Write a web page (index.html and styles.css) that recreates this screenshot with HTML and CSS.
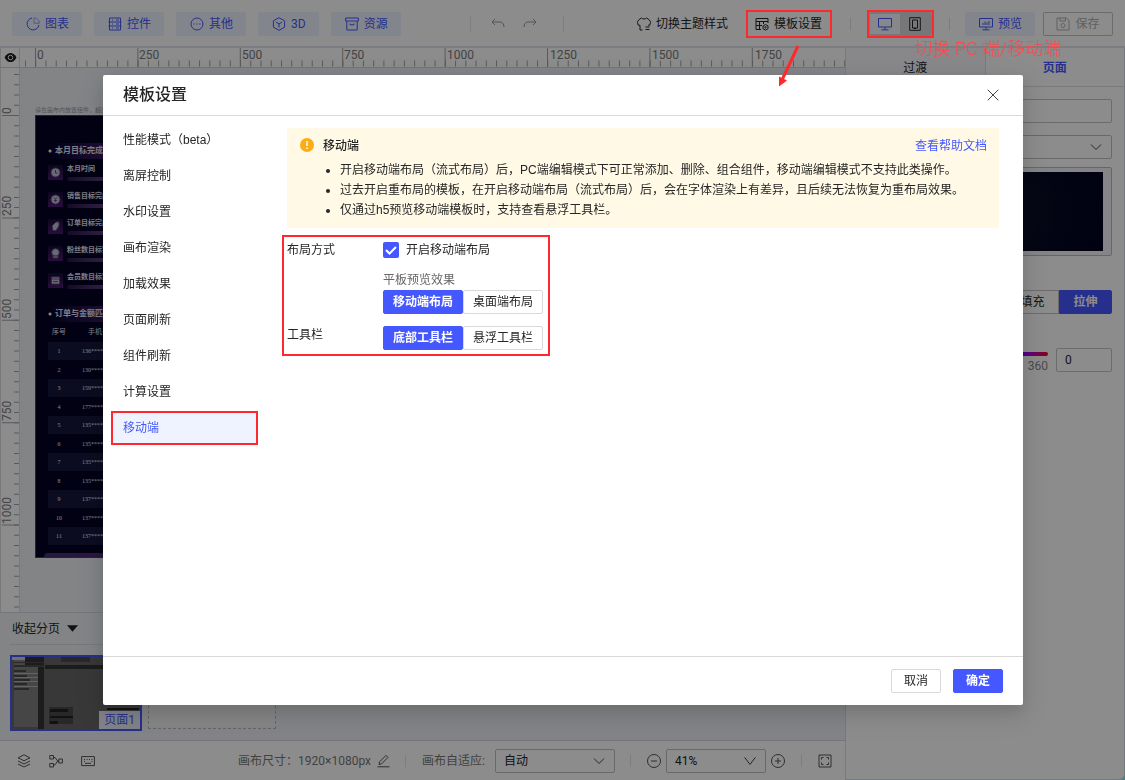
FILE: index.html
```html
<!DOCTYPE html>
<html lang="zh-CN">
<head>
<meta charset="utf-8">
<title>模板设置</title>
<link rel="stylesheet" href="styles.css">
</head>
<body>
<div class="app">
  <header class="topbar">
    <nav class="tools">
      <button class="tool"><svg class="ico" viewBox="0 0 14 14"><path d="M6 1a6 6 0 1 0 7 7"/><path d="M8 .8V6.200h5.400A6 6 0 0 0 8 .8z" opacity=".5"/></svg>图表</button>
      <button class="tool"><svg class="ico" viewBox="0 0 14 14"><path d="M1.500 1h11v12h-11zM.5 5h13M.5 9h13M4 3h1M8 3h3M4 7h1M8 7h3M4 11h1M8 11h3"/></svg>控件</button>
      <button class="tool"><svg class="ico" viewBox="0 0 14 14"><circle cx="7" cy="7" r="6"/><path d="M3.500 7h1.200M6.400 7h1.200M9.300 7h1.200"/></svg>其他</button>
      <button class="tool"><svg class="ico" viewBox="0 0 14 14"><path d="M7 .7l5.600 3.100v6.400L7 13.300l-5.600-3.100V3.800z"/><path d="M4 5.200l3 1.700 3-1.700M7 6.900v3.500"/></svg>3D</button>
      <button class="tool"><svg class="ico" viewBox="0 0 14 14"><path d="M.6 1h12.800v3H.6zM1.800 4v9h10.400V4M5 6.500v1.300h4V6.500"/></svg>资源</button>
    </nav>
    <div class="history">
      <button class="plain muted" aria-label="撤销"><svg class="ico" viewBox="0 0 14 14"><path d="M4 2L1 5l3 3M1 5h8c2.500 0 4 2 4 5"/></svg></button>
      <button class="plain muted" aria-label="重做"><svg class="ico" viewBox="0 0 14 14"><path d="M10 2l3 3-3 3M13 5H5c-2.500 0-4 2-4 5"/></svg></button>
    </div>
    <div class="actions">
      <button class="plain"><svg class="ico" viewBox="0 0 14 14"><path d="M5.500 13H3V8.200H1.200L.5 5.500C.5 3.500 2.500 2 4.500 1c1 1.300 4 1.300 5 0 2 1 4 2.500 4 4.500l-.7 2.700H11M8.500 10h4M8.500 12.500h4"/></svg>切换主题样式</button>
      <button class="plain template"><svg class="ico" viewBox="0 0 14 14"><path d="M6 12.500H1V1.500h12V6M1 4.500h12M4.500 4.500v8M1 8.500h6M8.500 4.500V7"/><path d="M10.500 7.500l2.500 1.400v2.800l-2.500 1.400L8 11.700V8.900z"/><circle cx="10.500" cy="10.300" r=".7"/></svg>模板设置</button>
      <i class="rule"></i>
      <div class="device">
        <button class="device-btn on" aria-label="PC 端"><svg class="ico-lg" viewBox="0 0 16 14"><path d="M1.500 1.500h13v8.500h-13zM8 10v2.500M4.500 12.800h7"/></svg></button>
        <button class="device-btn" aria-label="移动端"><svg class="ico-lg" viewBox="0 0 16 14"><path d="M2.700.7h10.600v12.600H2.700z"/><path d="M5.500 3h5v8h-5zM7 11.500h2"/></svg></button>
      </div>
      <i class="rule"></i>
      <button class="tool"><svg class="ico-lg" viewBox="0 0 16 14"><path d="M1.500 1.500h13v8.500h-13zM8 10v2.500M4.500 12.800h7M5 8V6M7 8V4.500M9 8V5.500M11 8V4"/></svg>预览</button>
      <button class="save"><svg class="ico" viewBox="0 0 14 14"><path d="M1 1h9.500L13 3.500V13H1zM4 1v3h5.500V1"/><circle cx="7" cy="8.500" r="2"/></svg>保存</button>
    </div>
  </header>

  <div class="body">
    <main class="work">
      <div class="ruler-row">
        <button class="eye" aria-label="显示"><svg viewBox="0 0 14 12"><path d="M.5 6C2.500 2 5 1 7 1s4.500 1 6.500 5C11.500 10 9 11 7 11S2.500 10 .5 6z" fill="#1c1c1c"/><circle cx="7" cy="6" r="2.500" stroke="#fff"/></svg></button>
        <svg class="ruler-h"><path class="tick" d="M5 15.500h820" stroke-width="6" stroke-dasharray="1 9.240"/><path class="tick" d="M15 9.500h810" stroke-width="19" stroke-dasharray="1 101.400"/>
          <text x="17" y="11">0</text><text x="119" y="11">250</text><text x="222" y="11">500</text><text x="324" y="11">750</text><text x="427" y="11">1000</text><text x="530" y="11">1250</text><text x="632" y="11">1500</text><text x="735" y="11">1750</text></svg>
      </div>
      <div class="stage">
        <svg class="ruler-v"><path class="tick" d="M16 6v700" stroke-width="6" stroke-dasharray="1 9.240"/><path class="tick" d="M10 47v700" stroke-width="18" stroke-dasharray="1 101.400"/>
          <g transform="rotate(-90)"><text x="-46" y="10">0</text><text x="-148" y="10">250</text><text x="-251" y="10">500</text><text x="-353" y="10">750</text><text x="-456" y="10">1000</text></g></svg>
        <div class="scene">
          <p class="hint">请在画布内放置组件，超出画布部分将不显示</p>
          <section class="board">
            <h2 class="board-title">本月目标完成情况</h2>
            <ul class="goals">
              <li class="goal"><svg class="goal-ico" viewBox="0 0 15 15"><circle cx="7.500" cy="7.500" r="4.500"/><path d="M7.500 5v3h2"/></svg><span class="goal-name">本月时间<b class="bar"></b></span></li>
              <li class="goal"><svg class="goal-ico" viewBox="0 0 15 15"><circle cx="7.500" cy="7.500" r="4.500"/><path d="M6 5.500l1.500 2 1.500-2M7.500 7.500V10M6 8.500h3"/></svg><span class="goal-name">销售目标完成率<b class="bar"></b></span></li>
              <li class="goal"><svg class="goal-ico" viewBox="0 0 15 15"><path d="M4 7l4-4h3v4l-3 4.500H5z"/></svg><span class="goal-name">订单目标完成率<b class="bar"></b></span></li>
              <li class="goal"><svg class="goal-ico" viewBox="0 0 15 15"><circle cx="7.500" cy="6.500" r="3.800"/><path d="M5 10h5v2H5z"/></svg><span class="goal-name">粉丝数目标完成率<b class="bar"></b></span></li>
              <li class="goal"><svg class="goal-ico" viewBox="0 0 15 15"><path d="M3.500 4h8v7h-8z"/><path d="M3.500 6h8M5 8.500h5"/></svg><span class="goal-name">会员数目标完成率<b class="bar"></b></span></li>
            </ul>
            <h2 class="board-title">订单与金额匹配</h2>
            <table class="orders">
              <thead><tr><th>序号</th><th>手机号</th></tr></thead>
              <tbody>
                <tr><td>1</td><td>136****2</td></tr><tr><td>2</td><td>130****8</td></tr><tr><td>3</td><td>159****5</td></tr><tr><td>4</td><td>177****8</td></tr><tr><td>5</td><td>135****7</td></tr><tr><td>6</td><td>135****5</td></tr><tr><td>7</td><td>135****8</td></tr><tr><td>8</td><td>135****8</td></tr><tr><td>9</td><td>137****5</td></tr><tr><td>10</td><td>137****5</td></tr><tr><td>11</td><td>137****5</td></tr>
              </tbody>
            </table>
            <div class="glow"></div>
          </section>
        </div>
      </div>
      <section class="pages">
        <button class="collapse">收起分页<svg viewBox="0 0 12 7"><path d="M0 0h12L6 7z"/></svg></button>
        <div class="thumbs">
          <button class="thumb">
            <svg viewBox="0 0 128 72" preserveAspectRatio="none"><path fill="#666" d="M0 0h128v72H0z"/><path fill="#808080" d="M2 3h30v67H2z"/><path fill="#ccc" d="M0 0h13v3H0z"/><path fill="#333" d="M13 0h19v9H13zM26 10h6v62h-6zM33 8h95v4H33z"/><path fill="#b4b4b4" d="M2 16h24v1H2zM2 20h24v1H2zM2 24h24v1H2zM2 29h24v1H2z"/><path fill="#4a4a4a" d="M2 5h30v1H2zM2 8h30v2H2zM2 13h12v2H2zM2 18h13v2H2zM2 22h16v2H2zM2 26h13v2H2zM2 31h15v2H2zM49 0h29v5H49zM37 50h24v17H37z"/><path fill="#222" d="M38 52h18v3H38zM38 59h23v2H38zM38 64h8v3H38zM95 51h32v2H95z"/></svg>
            <span class="thumb-name">页面1</span>
          </button>
          <button class="thumb-add" aria-label="添加页面"></button>
        </div>
      </section>
      <footer class="status">
        <div class="status-tools">
          <button class="plain" aria-label="图层"><svg class="ico" viewBox="0 0 14 14"><path d="M7 .8l6 3-6 3-6-3zM1 7l6 3 6-3M1 10l6 3 6-3"/></svg></button>
          <button class="plain" aria-label="关系"><svg class="ico" viewBox="0 0 14 14"><path d="M.8 1.500h3.700V5H.8zM.8 9.500h3.700V13H.8zM9.800 5h3.600v4H9.800zM4.500 3.200C8 3.200 6.500 7 9.800 7M4.500 11.200C8 11.200 6.500 7 9.800 7"/></svg></button>
          <button class="plain" aria-label="键盘"><svg class="ico" viewBox="0 0 14 14"><path d="M.6 2.600h12.800v9H.6zM3 5.500h1M5.500 5.500h1M8 5.500h1M10.500 5.500h1M4 9.300h6M3 7.400h1M10.500 7.400h1"/></svg></button>
        </div>
        <div class="status-info">
          <span class="dim">画布尺寸：</span><span class="dim size">1920×1080px</span>
          <button class="plain" aria-label="编辑尺寸"><svg class="ico" viewBox="0 0 14 14"><path d="M1.500 12.800h12M3 10.500l.6-2.700L10 1.400l2 2-6.400 6.400z"/></svg></button>
          <i class="rule"></i>
          <label class="dim" for="fit">画布自适应:</label>
          <span class="pick fit"><select id="fit"><option>自动</option></select><svg viewBox="0 0 12 8"><path d="M1 1.500l5 5 5-5"/></svg></span>
          <i class="rule"></i>
          <div class="zoom">
            <button class="plain" aria-label="缩小"><svg class="ico" viewBox="0 0 14 14"><circle cx="7" cy="7" r="6.500"/><path d="M4 7h6"/></svg></button>
            <span class="pick scale"><select aria-label="缩放"><option>41%</option></select><svg viewBox="0 0 12 8"><path d="M.6.4L6 7.400l5.400-7"/></svg></span>
            <button class="plain" aria-label="放大"><svg class="ico" viewBox="0 0 14 14"><circle cx="7" cy="7" r="6.500"/><path d="M4 7h6M7 4v6"/></svg></button>
          </div>
          <i class="rule last"></i>
          <button class="plain" aria-label="全屏"><svg class="ico" viewBox="0 0 14 14"><path d="M1 1h12v12H1zM3.500 5.500v-2h2M8.500 3.500h2v2M10.500 8.500v2h-2M5.500 10.500h-2v-2"/></svg></button>
        </div>
      </footer>
    </main>

    <aside class="panel">
      <div class="tabs"><button class="tab">过渡</button><button class="tab current">页面</button></div>
      <div class="props">
        <input class="field" type="text" aria-label="名称">
        <span class="pick"><select aria-label="背景类型"><option></option></select><svg viewBox="0 0 12 8"><path d="M1 1.500l5 5 5-5"/></svg></span>
        <div class="preview"><div class="preview-img"></div></div>
        <div class="fill"><button class="fill-btn">填充</button><button class="fill-btn chosen">拉伸</button></div>
        <div class="hue"><div class="hue-scale"><div class="hue-bar"></div><span>360</span></div><input class="field hue-value" type="text" value="0" aria-label="色相"></div>
      </div>
    </aside>
  </div>
</div>

<div class="mask">
  <div class="modal" role="dialog" aria-labelledby="dlg-title">
    <header class="modal-head">
      <h1 id="dlg-title">模板设置</h1>
      <button class="close" aria-label="关闭"><svg viewBox="0 0 12 12"><path d="M.7.7l10.600 10.600M11.300.7L.7 11.300"/></svg></button>
    </header>
    <div class="modal-body">
      <nav class="menu">
        <a class="menu-item" href="#">性能模式（beta）</a>
        <a class="menu-item" href="#">离屏控制</a>
        <a class="menu-item" href="#">水印设置</a>
        <a class="menu-item" href="#">画布渲染</a>
        <a class="menu-item" href="#">加载效果</a>
        <a class="menu-item" href="#">页面刷新</a>
        <a class="menu-item" href="#">组件刷新</a>
        <a class="menu-item" href="#">计算设置</a>
        <a class="menu-item selected" href="#">移动端</a>
      </nav>
      <section class="content">
        <div class="notice">
          <svg class="notice-ico" viewBox="0 0 14 14"><circle cx="7" cy="7" r="7" fill="#faad14"/><path d="M7 3v5M7 9.500V11" stroke="#fff" stroke-width="1.500"/></svg>
          <div class="notice-main">
            <div class="notice-head"><strong>移动端</strong><a href="#">查看帮助文档</a></div>
            <ul>
              <li>开启移动端布局（流式布局）后，PC端编辑模式下可正常添加、删除、组合组件，移动端编辑模式不支持此类操作。</li>
              <li>过去开启重布局的模板，在开启移动端布局（流式布局）后，会在字体渲染上有差异，且后续无法恢复为重布局效果。</li>
              <li>仅通过h5预览移动端模板时，支持查看悬浮工具栏。</li>
            </ul>
          </div>
        </div>
        <form class="form">
          <div class="row">
            <span class="label">布局方式</span>
            <div>
              <label class="check"><input type="checkbox" checked>开启移动端布局</label>
              <p class="sub">平板预览效果</p>
              <div class="seg" role="radiogroup" aria-label="平板预览效果">
                <label><input type="radio" name="tablet" checked><span>移动端布局</span></label><label><input type="radio" name="tablet"><span>桌面端布局</span></label>
              </div>
            </div>
          </div>
          <div class="row">
            <span class="label bar-label">工具栏</span>
            <div class="seg" role="radiogroup" aria-label="工具栏">
              <label><input type="radio" name="bar" checked><span>底部工具栏</span></label><label><input type="radio" name="bar"><span>悬浮工具栏</span></label>
            </div>
          </div>
        </form>
      </section>
    </div>
    <footer class="modal-foot"><button class="btn">取消</button><button class="btn primary">确定</button></footer>
  </div>
</div>

<div class="notes">
  <svg viewBox="0 0 400 100"><path class="frame" d="M22 11h84v26H22zM143 11h65v26h-65z"/><path d="M73 46L57 80" stroke="#ff282c" stroke-width="3"/><path d="M54 86.500V76.500l8 4z" fill="#ff282c"/></svg>
  <span class="note-text">切换 PC 端/移动端</span>
</div>
</body>
</html>
```
FILE: styles.css
```css
:root {
  --blue: #4558ff;
  --pale: #eff2ff;
  --line: #dcdfe6;
  --border: #d9d9d9;
  --red: #ff282c;
  --ink: #262626;
}
* { box-sizing: border-box; }
body {
  margin: 0;
  background: #8fe6ee;
  color: var(--ink);
  font: 12px/20px Roboto, "Noto Sans CJK SC", sans-serif;
}
h1, h2, p, ul { margin: 0; padding: 0; }
button, input, select { font: inherit; color: inherit; margin: 0; }
button { border: 0; padding: 0; background: none; display: flex; align-items: center; justify-content: center; white-space: nowrap; }
a { text-decoration: none; color: var(--blue); }
svg { display: block; flex: none; fill: none; }
.ico, .ico-lg { width: 14px; height: 14px; stroke: currentColor; stroke-width: 1; }
.ico-lg { width: 16px; }

.app { height: 100vh; min-height: 600px; display: flex; flex-direction: column; overflow: hidden; }

/* top bar */
.topbar { height: 48px; flex: none; background: #fff; border-bottom: 2px solid #e2e4ee; display: flex; align-items: center; padding: 2px 12px 0; }
.tools { display: flex; gap: 12px; }
.tool { height: 24px; padding: 0 13px 0 14px; gap: 5px; background: var(--pale); color: var(--blue); border-radius: 2px; }
.history { display: flex; gap: 18px; margin-left: 69px; padding: 0 26px 0 20px; border: solid #e5e5e5; border-width: 0 1px; }
.plain { gap: 5px; }
.muted { color: #999; }
.history .plain { height: 16px; }
.actions { display: flex; align-items: center; margin-left: auto; }
.template { margin: 0 28px 0 27px; }
.rule { width: 1px; height: 12px; background: #e3e3e3; }
.device { display: flex; background: #d9d9dd; padding: 2px; margin: 0 17px; border-radius: 2px; }
.device-btn { width: 30px; height: 20px; }
.device-btn.on { background: #f6f7ff; color: var(--blue); }
.actions .tool { margin: 0 8px 0 15px; padding: 0 13px; gap: 4px; }
.save { width: 70px; height: 24px; gap: 5px; border: 1px solid #c4c4c4; border-radius: 2px; color: #b0b0b0; }

/* workspace */
.body { flex: 1; min-height: 0; display: flex; }
.work { flex: 1; min-width: 0; display: flex; flex-direction: column; background: #eef0f5; }
.ruler-row { height: 20px; flex: none; display: flex; background: #fff; border-bottom: 1px solid #cfd1d6; }
.eye { width: 20px; border: solid #dadce4; border-width: 0 1px; flex: none; }
.eye svg { width: 13px; height: 11px; }
.ruler-h { flex: 1; min-width: 0; height: 19px; }
.ruler-h text, .ruler-v text { font-size: 12px; fill: #7a7a7a; }
.tick { stroke: #a4a4a4; }
.stage { flex: 1; min-height: 0; display: flex; overflow: hidden; }
.ruler-v { width: 20px; height: 100%; background: #fff; border: solid #dadce4; border-width: 0 1px; }
.scene { flex: 1; min-width: 0; padding: 37px 0 0 15px; overflow: hidden; }
.hint { height: 10px; font-size: 6px; line-height: 10px; color: #999; }
.board { width: 787px; height: 443px; background: #020224; border: 1px solid #445; padding: 27px 12px 0; color: #e6e6f5; }
.board-title { font-size: 8px; line-height: 16px; padding-left: 7px; background: radial-gradient(circle at 2px 8px, #eee 1px, transparent 2px), linear-gradient(90deg, transparent, #3a1a66 60px); }
.goals { list-style: none; display: grid; gap: 12px; padding: 6px 0 18px; }
.goal { display: flex; gap: 4px; height: 15px; }
.goal-ico { width: 15px; height: 15px; background: linear-gradient(#160a33, #4b1a70); fill: #c4bed8; stroke: #5b5376; }
.goal-name { font-size: 7px; line-height: 9px; font-weight: 700; flex: 1; }
.bar { display: block; height: 4px; margin-top: 3px; border-radius: 2px; background: linear-gradient(90deg, #281448, #6b4d92 50px); }
.orders { width: 100%; border-collapse: collapse; table-layout: fixed; font-size: 6px; line-height: 18px; text-align: center; }
.orders th { font-size: 7px; font-weight: 400; padding: 0; height: 20px; }
.orders th:first-child { width: 22px; }
.orders td { padding: 0; height: 18px; font-family: "Liberation Serif", serif; }
.orders th + th, .orders td + td { text-align: left; padding-left: 12px; }
.orders th + th { padding-left: 18px; }
.orders tbody tr:nth-child(odd) { background: #17173d; }
.orders tbody tr:nth-child(even) td { height: 19px; }
.glow { height: 4px; margin: 8px -4px 0; border-radius: 4px 4px 0 0; background: #4a2a74; }

/* page strip */
.pages { height: 128px; flex: none; border-top: 1px solid #d6d8de; padding: 0 12px; }
.collapse { height: 31px; gap: 7px; }
.collapse svg { width: 11px; height: 7px; fill: #222; }
.thumbs { display: flex; gap: 6px; border-top: 1px solid #d9dbe1; padding-top: 10px; margin-left: -2px; }
.thumb { position: relative; width: 132px; height: 76px; border: 2px solid var(--blue); }
.thumb svg { width: 100%; height: 100%; }
.thumb-name { position: absolute; right: 0; bottom: 0; background: #eceef8; color: var(--blue); padding: 0 5px; line-height: 18px; }
.thumb-add { width: 128px; height: 74px; border: 1px dashed #bbb; background: #f3f3f3; }

/* status bar */
.status { height: 40px; flex: none; display: flex; align-items: center; background: #fff; border-top: 1px solid #d4d8e0; padding: 0 13px 0 17px; color: #555; }
.status-tools { display: flex; gap: 18px; }
.status-info { display: flex; align-items: center; margin-left: auto; }
.dim { color: #777; }
.size { margin: 0 5px 0 0; }
.status-info .rule { margin: 0 16px 0 15px; }
.status-info .last { margin: 0 16px; }
.pick { position: relative; display: flex; color: #222; }
.pick select { appearance: none; width: 100%; height: 24px; border: 1px solid #bfbfbf; border-radius: 2px; background: #fff; padding: 0 8px; }
.pick svg { position: absolute; right: 10px; top: 8px; width: 12px; height: 8px; stroke: #444; pointer-events: none; }
.fit { width: 120px; margin-left: 10px; }
.zoom { display: flex; align-items: center; gap: 5px; }
.scale { width: 100px; }

/* properties panel */
.panel { width: 280px; flex: none; background: #fff; border: 1px solid #d8dce6; border-top: 0; border-radius: 0 0 6px 0; }
.tabs { display: flex; }
.tab { flex: 1; height: 39px; padding-top: 2px; background: #f7f8fb; border-bottom: 1px solid var(--line); }
.tab.current { background: #fff; color: var(--blue); font-weight: 700; border-left: 1px solid var(--line); }
.props { padding: 12px 12px 0; display: flex; flex-direction: column; }
.field { height: 24px; width: 100%; border: 1px solid #c4c4c4; border-radius: 2px; padding: 0 8px; background: #fff; }
.props .pick { margin: 12px 0 8px; }
.preview { border: 1px solid #b8bac0; border-radius: 2px; background: #f2f3f6; padding: 4px 8px; }
.preview-img { height: 79px; background: radial-gradient(circle at 60% 50%, #0b1028, #02021f 70%); }
.fill { display: flex; justify-content: flex-end; margin: 34px 0; }
.fill-btn { width: 53px; height: 24px; border: 1px solid #c4c4c4; }
.fill-btn.chosen { background: var(--blue); border-color: var(--blue); color: #fff; font-weight: 700; border-radius: 0 2px 2px 0; }
.hue { display: flex; gap: 8px; }
.hue-scale { flex: 1; text-align: right; color: #888; padding-top: 4px; }
.hue-bar { height: 4px; border-radius: 2px; background: linear-gradient(90deg, red, #ff0, #0f0, #0ff, #00f 75%, #a0e 90%, #f02); }
.hue-value { width: 56px; }

/* dialog */
.mask { position: fixed; inset: 0; background: rgba(0, 0, 0, .45); display: flex; align-items: center; justify-content: center; padding-left: 1px; font-family: "Liberation Sans", "Noto Sans CJK SC", sans-serif; }
.modal { width: 920px; max-width: 96%; min-height: 630px; background: #fff; border-radius: 2px; display: flex; flex-direction: column; box-shadow: 0 9px 28px 8px rgba(0, 0, 0, .08), 0 6px 16px rgba(0, 0, 0, .12); }
.modal-head { height: 41px; display: flex; align-items: center; justify-content: space-between; padding: 0 24px 0 20px; border-bottom: 1px solid var(--border); }
.modal-head h1 { font-size: 16px; font-weight: 500; }
.close svg { width: 12px; height: 12px; stroke: #444; }
.modal-body { flex: 1; display: flex; }
.menu { width: 155px; padding: 7px 0 6px 8px; flex: none; }
.menu-item { display: block; line-height: 30px; border: 2px solid transparent; padding-left: 10px; margin: 0 0 2px; color: var(--ink); }
.menu-item.selected { background: var(--pale); border-color: var(--red); color: var(--blue); }
.content { flex: 1; padding: 12px 24px 0 24px; }
.notice { display: flex; gap: 9px; background: #fff9e6; padding: 8px 12px 8px 13px; margin-left: 5px; }
.notice-ico { width: 14px; height: 14px; margin-top: 2px; }
.notice-main { flex: 1; }
.notice-head { display: flex; justify-content: space-between; margin-bottom: 4px; }
.notice strong { font-weight: 500; }
.notice ul { padding-left: 17px; }
.form { width: 268px; margin-top: 7px; padding: 3px 3px 4px; border: 2px solid var(--red); display: grid; gap: 12px; }
.row { display: grid; grid-template-columns: 96px 1fr; }
.label { line-height: 20px; }
.bar-label { line-height: 18px; }
.check { display: flex; align-items: center; gap: 7px; }
.check input { appearance: none; width: 16px; height: 16px; border-radius: 2px; background: var(--blue) url("data:image/svg+xml,%3Csvg xmlns='http://www.w3.org/2000/svg' viewBox='0 0 16 16'%3E%3Cpath d='M3 8l3.500 3.500L13 5' fill='none' stroke='white' stroke-width='2'/%3E%3C/svg%3E"); }
.sub { color: #666; margin-top: 10px; }
.seg { display: flex; width: 160px; }
.seg label { flex: 1; }
.seg input { position: absolute; opacity: 0; }
.seg span { display: block; line-height: 22px; text-align: center; border: 1px solid var(--border); border-radius: 2px; }
.seg input:checked + span { background: var(--blue); border-color: var(--blue); color: #fff; font-weight: 700; }
.modal-foot { height: 49px; display: flex; align-items: center; justify-content: flex-end; gap: 12px; padding-right: 20px; border-top: 1px solid var(--border); }
.btn { width: 50px; height: 24px; border: 1px solid var(--border); border-radius: 2px; }
.btn.primary { background: var(--blue); border-color: var(--blue); color: #fff; font-weight: 700; }

/* callouts */
.notes { position: fixed; top: 0; right: 0; width: 400px; pointer-events: none; }
.notes svg { width: 400px; height: 100px; }
.frame { stroke: var(--red); stroke-width: 2; }
.note-text { position: absolute; top: 38px; right: 64px; font-size: 18px; line-height: 22px; font-weight: 300; color: #ff4448; white-space: nowrap; }
```
